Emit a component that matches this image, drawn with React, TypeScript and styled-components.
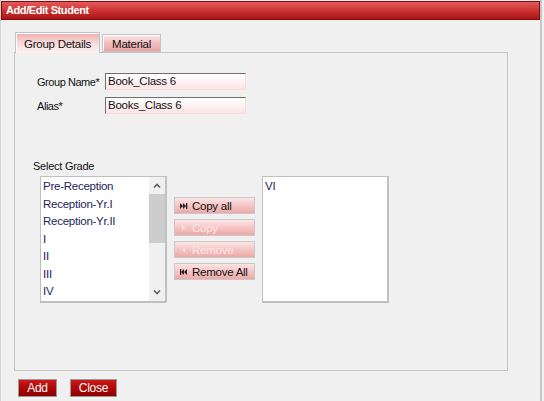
import React from "react";
import styled, { createGlobalStyle } from "styled-components";

const GlobalStyle = createGlobalStyle`
  html, body {
    margin: 0;
    padding: 0;
    background: #f0f0f0;
    font-family: "Liberation Sans", Arial, sans-serif;
    letter-spacing: -0.25px;
  }
`;

const Window = styled.div`
  width: 542px;
  height: 401px;
  box-sizing: border-box;
  border-left: 1px solid #d4d4d4;
  border-right: 2px solid #c6c6c6;
  background: #f0f0f0;
  display: flex;
  flex-direction: column;
`;

const TitleBar = styled.div`
  height: 19px;
  margin-top: 1px;
  box-sizing: border-box;
  border: 1px solid #8c0808;
  background: linear-gradient(to bottom, #e35a5a 0%, #cc3434 50%, #a81414 100%);
  color: #fff;
  font-size: 11px;
  font-weight: bold;
  line-height: 17px;
  padding-left: 4px;
  letter-spacing: -0.4px;
`;

const Body = styled.div`
  padding: 12px 0 0 13px;
  display: flex;
  flex-direction: column;
`;

const TabStrip = styled.div`
  display: flex;
  align-items: flex-end;
  gap: 2px;
  padding-left: 1px;
  height: 20px;
`;

const Tab = styled.div<{ $active?: boolean }>`
  box-sizing: border-box;
  height: ${(p) => (p.$active ? 21 : 18)}px;
  margin-bottom: ${(p) => (p.$active ? -1 : 0)}px;
  padding: 0 ${(p) => (p.$active ? 8 : 9)}px;
  border: 1px solid #c4c4c4;
  border-bottom: ${(p) => (p.$active ? "none" : "1px solid #c4c4c4")};
  background: ${(p) =>
    p.$active
      ? "linear-gradient(to bottom, #eeb0b0 0%, #f8dcdc 55%, #fdf3f3 100%)"
      : "linear-gradient(to bottom, #fbe8e8 0%, #f2c0c0 50%, #e9a4a4 100%)"};
  box-shadow: inset 1px 1px 0 #fff;
  font-size: 11.5px;
  color: #111;
  line-height: ${(p) => (p.$active ? 22 : 18)}px;
  position: relative;
  z-index: ${(p) => (p.$active ? 1 : 0)};
`;

const Panel = styled.div`
  width: 494px;
  height: 319px;
  box-sizing: border-box;
  border: 1px solid #c4c4c4;
  padding: 20px 0 0 22px;
  display: flex;
  flex-direction: column;
`;

const FieldRow = styled.div`
  display: flex;
  align-items: center;
  height: 17px;
  margin-bottom: 7px;
`;

const Label = styled.label`
  width: 68px;
  font-size: 11px;
  letter-spacing: -0.45px;
  color: #111;
`;

const Input = styled.div`
  width: 141px;
  height: 17px;
  box-sizing: border-box;
  border-top: 1px solid #6e6e6e;
  border-left: 1px solid #6e6e6e;
  border-right: 1px solid #f4dede;
  border-bottom: 1px solid #f4dede;
  background: linear-gradient(to bottom, #ffffff 0%, #fdf0f0 60%, #fbe2e2 100%);
  font-size: 11.5px;
  color: #111;
  line-height: 15px;
  padding-left: 2px;
`;

const SectionLabel = styled.div`
  margin-top: 39px;
  font-size: 11px;
  color: #111;
  line-height: 13px;
  margin-left: -4px;
`;

const PickerRow = styled.div`
  display: flex;
  align-items: flex-start;
  margin-top: 3px;
  margin-left: 3px;
`;

const ListBox = styled.div`
  width: 127px;
  height: 127px;
  box-sizing: border-box;
  border-style: solid;
  border-width: 1px 2px 2px 1px;
  border-color: #c0c0c0;
  background: #fff;
  display: flex;
`;

const Items = styled.div`
  flex: 1;
  padding: 1px 0 0 2px;
  overflow: hidden;
`;

const Item = styled.div`
  font-size: 11.5px;
  line-height: 17.5px;
  color: #1c2458;
  white-space: nowrap;
`;

const ScrollBar = styled.div`
  width: 16px;
  background: #f0f0f0;
  display: flex;
  flex-direction: column;
`;

const ScrollArrow = styled.div`
  height: 17px;
  display: flex;
  align-items: center;
  justify-content: center;
`;

const Thumb = styled.div`
  height: 49px;
  background: #cdcdcd;
`;

const Track = styled.div`
  flex: 1;
`;

const ButtonCol = styled.div`
  display: flex;
  flex-direction: column;
  gap: 5px;
  margin: 21px 7px 0 7px;
`;

const MoveButton = styled.div<{ $disabled?: boolean }>`
  width: 81px;
  height: 17px;
  box-sizing: border-box;
  border: 1px solid #c8c8c8;
  background: linear-gradient(to bottom, #fde6e6 0%, #f5c4c4 50%, #eda9a9 100%);
  display: flex;
  align-items: center;
  gap: 4px;
  padding-left: 5px;
  font-size: 11.5px;
  color: ${(p) => (p.$disabled ? "#fbe6e6" : "#111")};
`;

const Footer = styled.div`
  display: flex;
  gap: 13px;
  margin: 8px 0 0 4px;
`;

const ActionButton = styled.div<{ $w: number }>`
  width: ${(p) => p.$w}px;
  height: 18px;
  box-sizing: border-box;
  border: 1px solid #9a9a9a;
  background: linear-gradient(to bottom, #cc1a1a 0%, #b00808 50%, #8c0000 100%);
  color: #fff;
  font-size: 12px;
  line-height: 16px;
  text-align: center;
`;

const Chevron = ({ up }: { up?: boolean }) => (
  <svg width="8" height="5" viewBox="0 0 8 5">
    <path
      d={up ? "M1 4.5 L4 1.5 L7 4.5" : "M1 0.5 L4 3.5 L7 0.5"}
      fill="none"
      stroke="#606060"
      strokeWidth="1.6"
    />
  </svg>
);

type IconKind = "all" | "one" | "back" | "backAll";

const MoveIcon = ({ kind, color }: { kind: IconKind; color: string }) => {
  const shapes: Record<IconKind, React.ReactNode> = {
    all: (
      <>
        <path d="M0 1 L3 4 L0 7 Z" />
        <path d="M3 1 L6 4 L3 7 Z" />
        <rect x="6" y="1" width="1.3" height="6" />
      </>
    ),
    one: <path d="M2 1.5 L5 4 L2 6.5 Z" />,
    back: <path d="M5 1.5 L2 4 L5 6.5 Z" />,
    backAll: (
      <>
        <rect x="0" y="1" width="1.3" height="6" />
        <path d="M4 1 L1 4 L4 7 Z" />
        <path d="M7 1 L4 4 L7 7 Z" />
      </>
    ),
  };
  return (
    <svg width="8" height="8" viewBox="0 0 8 8" fill={color}>
      {shapes[kind]}
    </svg>
  );
};

const grades = ["Pre-Reception", "Reception-Yr.I", "Reception-Yr.II", "I", "II", "III", "IV"];

const moves: { label: string; kind: IconKind; disabled?: boolean }[] = [
  { label: "Copy all", kind: "all" },
  { label: "Copy", kind: "one", disabled: true },
  { label: "Remove", kind: "back", disabled: true },
  { label: "Remove All", kind: "backAll" },
];

const App = () => {
  return (
    <>
      <GlobalStyle />
      <Window>
        <TitleBar>Add/Edit Student</TitleBar>
        <Body>
          <TabStrip>
            <Tab $active>Group Details</Tab>
            <Tab>Material</Tab>
          </TabStrip>
          <Panel>
            <FieldRow>
              <Label>Group Name*</Label>
              <Input>Book_Class 6</Input>
            </FieldRow>
            <FieldRow>
              <Label>Alias*</Label>
              <Input>Books_Class 6</Input>
            </FieldRow>
            <SectionLabel>Select Grade</SectionLabel>
            <PickerRow>
              <ListBox>
                <Items>
                  {grades.map((g) => (
                    <Item key={g}>{g}</Item>
                  ))}
                </Items>
                <ScrollBar>
                  <ScrollArrow>
                    <Chevron up />
                  </ScrollArrow>
                  <Thumb />
                  <Track />
                  <ScrollArrow>
                    <Chevron />
                  </ScrollArrow>
                </ScrollBar>
              </ListBox>
              <ButtonCol>
                {moves.map((m) => (
                  <MoveButton key={m.label} $disabled={m.disabled}>
                    <MoveIcon kind={m.kind} color={m.disabled ? "#fbe6e6" : "#222"} />
                    {m.label}
                  </MoveButton>
                ))}
              </ButtonCol>
              <ListBox>
                <Items>
                  <Item>VI</Item>
                </Items>
              </ListBox>
            </PickerRow>
          </Panel>
          <Footer>
            <ActionButton $w={39}>Add</ActionButton>
            <ActionButton $w={47}>Close</ActionButton>
          </Footer>
        </Body>
      </Window>
    </>
  );
};

export default App;
